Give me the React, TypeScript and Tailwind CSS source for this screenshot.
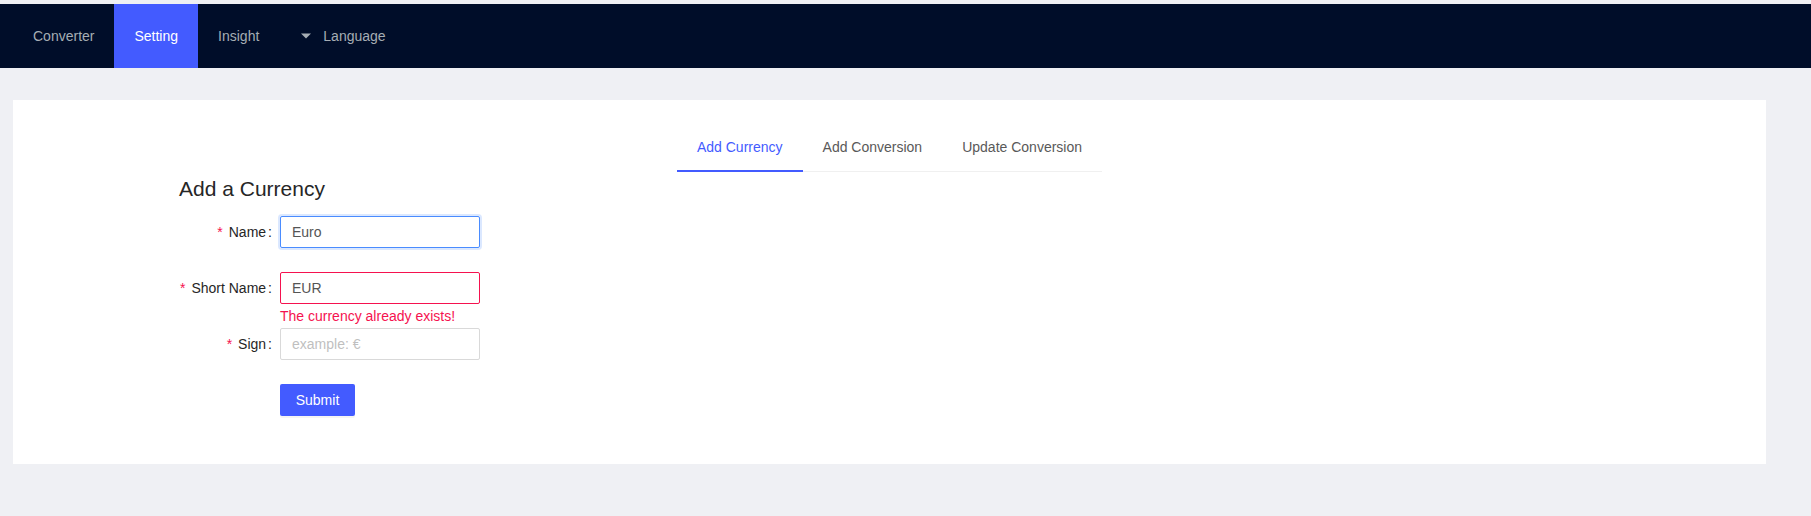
import React, { useState } from "react";

const navItems = ["Converter", "Setting", "Insight"];
const tabs = ["Add Currency", "Add Conversion", "Update Conversion"];

function Field({
  label,
  children,
  error,
}: {
  label: string;
  children: React.ReactNode;
  error?: string;
}) {
  return (
    <div className="flex items-start">
      <div className="w-[101px] h-8 flex items-center justify-end text-[14px] text-[#262626] whitespace-nowrap">
        <span className="text-[#f5124f] mr-[6px] text-[14px]">*</span>
        <span>{label}</span>
        <span className="ml-[2px] mr-[8px]">:</span>
      </div>
      <div className="flex flex-col">
        {children}
        {error && (
          <div className="h-6 flex items-center text-[14px] text-[#f5124f]">
            {error}
          </div>
        )}
      </div>
    </div>
  );
}

export default function App() {
  const [active, setActive] = useState(0);
  const [name, setName] = useState("Euro");
  const [shortName, setShortName] = useState("EUR");
  const [sign, setSign] = useState("");

  return (
    <div
      className="min-h-[516px] bg-[#eff0f4] pt-[4px]"
      style={{ fontFamily: '"Liberation Sans", Arial, sans-serif' }}
    >
      <header className="h-16 bg-[#000d29] flex pl-[13px] text-[14px]">
        {navItems.map((item) => (
          <div
            key={item}
            className={
              item === "Setting"
                ? "h-full flex items-center px-5 bg-[#435bff] text-white"
                : "h-full flex items-center px-5 text-[#a6adb4]"
            }
          >
            {item}
          </div>
        ))}
        <div className="h-full flex items-center pl-[22px] text-[#a6adb4]">
          <svg width="10" height="6" viewBox="0 0 10 6" className="mr-[12px]">
            <path d="M0 0.5 L10 0.5 L5 5.5 Z" fill="#a6adb4" />
          </svg>
          Language
        </div>
      </header>

      <main className="pt-8">
        <div className="ml-[13px] w-[1753px] bg-white pt-6 pb-12">
          <div className="flex justify-center">
            <div className="flex border-b border-[#f0f0f0]">
              {tabs.map((tab, i) => (
                <button
                  key={tab}
                  onClick={() => setActive(i)}
                  className={
                    i === active
                      ? "relative px-5 pt-3 pb-[13px] leading-[22px] text-[14px] text-[#435bff]"
                      : "relative px-5 pt-3 pb-[13px] leading-[22px] text-[14px] text-[#595959]"
                  }
                >
                  {tab}
                  {i === active && (
                    <span className="absolute left-0 right-0 bottom-[-1px] h-[2px] bg-[#435bff]" />
                  )}
                </button>
              ))}
            </div>
          </div>

          <div className="ml-[166px] mt-[3px]">
            <h3 className="text-[21px] leading-[28px] text-[#262626]">
              Add a Currency
            </h3>

            <div className="mt-[13px] flex flex-col gap-6">
              <Field label="Name">
                <input
                  value={name}
                  onChange={(e) => setName(e.target.value)}
                  className="w-[200px] h-8 px-[11px] border border-[#4a8cff] rounded-[2px] text-[14px] text-[#555] outline-none shadow-[0_0_0_2px_rgba(74,140,255,0.2)]"
                />
              </Field>

              <div className="flex flex-col">
                <Field label="Short Name" error="The currency already exists!">
                  <input
                    value={shortName}
                    onChange={(e) => setShortName(e.target.value)}
                    className="w-[200px] h-8 px-[11px] border border-[#f5124f] rounded-[2px] text-[14px] text-[#555] outline-none"
                  />
                </Field>
                <Field label="Sign">
                  <input
                    value={sign}
                    onChange={(e) => setSign(e.target.value)}
                    placeholder="example: €"
                    className="w-[200px] h-8 px-[11px] border border-[#d9d9d9] rounded-[2px] text-[14px] text-[#555] placeholder:text-[#bfbfbf] outline-none"
                  />
                </Field>
              </div>

              <div className="pl-[101px]">
                <button className="h-8 w-[75px] bg-[#435bff] text-white text-[14px] rounded-[2px] shadow-[0_2px_0_rgba(0,0,0,0.045)]">
                  Submit
                </button>
              </div>
            </div>
          </div>
        </div>
      </main>
    </div>
  );
}
